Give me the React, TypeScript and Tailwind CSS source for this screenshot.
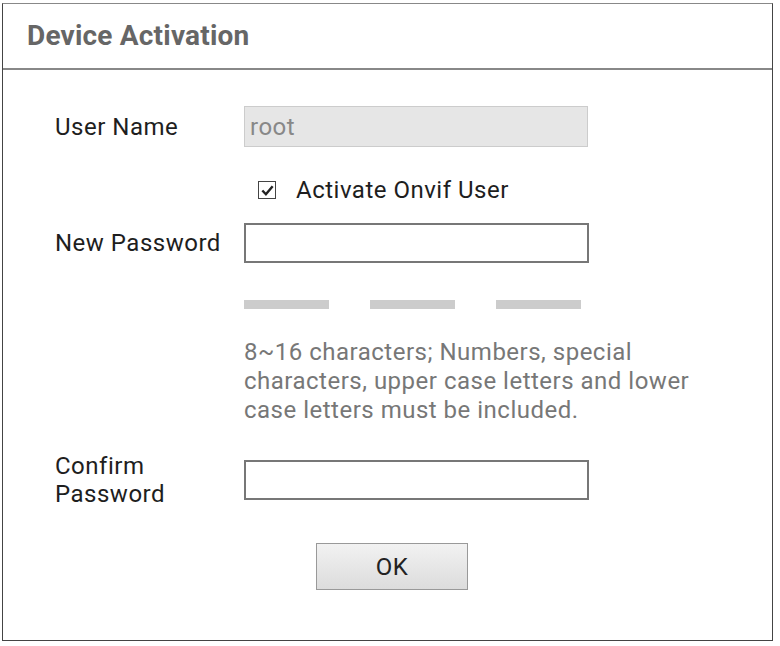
export default function App() {
  const font = { fontFamily: 'Roboto, "Open Sans", sans-serif' }
  return (
    <div className="w-[780px] h-[646px] bg-white pt-[3px] pl-[2px]" style={font}>
      <div className="w-[771px] h-[638px] border border-[#444] border-t-[#888] flex flex-col">
        <div className="h-[66px] border-b-2 border-[#888] flex items-center pl-[24px]">
          <h1 className="text-[28px] font-bold text-[#666] tracking-[0.2px]">Device Activation</h1>
        </div>

        <div className="flex flex-col pl-[52px] text-[24px] text-[#1e1e1e] tracking-[0.5px]">
          <div className="flex items-center mt-[36px]">
            <label className="w-[189px]">User Name</label>
            <div className="w-[344px] h-[41px] bg-[#e6e6e6] border border-[#ccc] flex items-center px-[5px] text-[#888]">
              root
            </div>
          </div>

          <div className="flex items-center ml-[203px] mt-[32px] h-[22px]">
            <span className="w-[18px] h-[18px] border border-[#444] bg-white flex items-center justify-center">
              <svg viewBox="0 0 16 16" className="w-[15px] h-[15px]">
                <path d="M2.5 8 L6.3 12 L13.5 3.5" fill="none" stroke="#222" strokeWidth="2.6" />
              </svg>
            </span>
            <span className="ml-[20px]">Activate Onvif User</span>
          </div>

          <div className="flex items-center mt-[22px]">
            <label className="w-[189px]">New Password</label>
            <input className="w-[345px] h-[40px] border-2 border-[#777] bg-white outline-none" type="password" />
          </div>

          <div className="flex ml-[189px] mt-[37px] gap-[41px]">
            <div className="w-[85px] h-[9px] bg-[#ccc]" />
            <div className="w-[85px] h-[9px] bg-[#ccc]" />
            <div className="w-[85px] h-[9px] bg-[#ccc]" />
          </div>

          <p className="ml-[189px] mt-[29px] text-[#777] leading-[29px]">
            8~16 characters; Numbers, special
            <br />
            characters, upper case letters and lower
            <br />
            case letters must be included.
          </p>

          <div className="flex items-center mt-[27px]">
            <label className="w-[189px] leading-[28px]">
              Confirm
              <br />
              Password
            </label>
            <input className="w-[345px] h-[40px] border-2 border-[#777] bg-white outline-none" type="password" />
          </div>

          <div className="ml-[261px] mt-[35px]">
            <button className="w-[152px] h-[47px] border border-[#999] bg-gradient-to-b from-[#f2f2f2] to-[#dcdcdc] text-[#222]">
              OK
            </button>
          </div>
        </div>
      </div>
    </div>
  )
}
